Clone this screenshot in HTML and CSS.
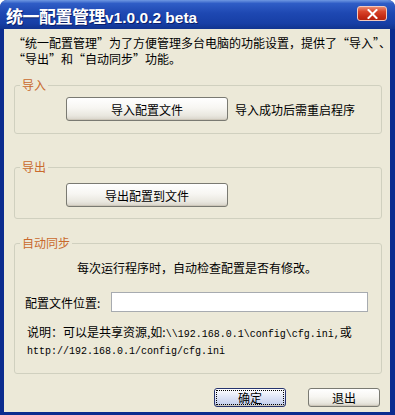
FILE: index.html
```html
<!DOCTYPE html>
<html lang="zh-CN">
<head>
    <meta charset="UTF-8">
    <meta name="viewport" content="width=device-width, initial-scale=1.0">
    <title>统一配置管理</title>
    <link rel="stylesheet" href="styles.css">
</head>
<body>
    <div class="window">
        <!-- 标题栏 -->
        <div class="titlebar">
            <span class="title"><span class="title-cn">统一配置管理</span><span class="title-ver">v1.0.0.2 beta</span></span>
            <button class="close-btn" aria-label="关闭">
                <svg width="11" height="10" viewBox="0 0 11 10">
                    <path d="M1.5 1 L9.5 9 M9.5 1 L1.5 9" stroke="#fff" stroke-width="2" stroke-linecap="square"/>
                </svg>
            </button>
        </div>

        <div class="frame">
            <p class="intro">“统一配置管理”为了方便管理多台电脑的功能设置，提供了“导入”、<br>“导出”和“自动同步”功能。</p>

            <!-- 导入 -->
            <fieldset class="group group-import">
                <legend>导入</legend>
                <div class="row">
                    <button class="btn btn-wide">导入配置文件</button>
                    <span class="hint">导入成功后需重启程序</span>
                </div>
            </fieldset>

            <!-- 导出 -->
            <fieldset class="group group-export">
                <legend>导出</legend>
                <div class="row">
                    <button class="btn btn-wide">导出配置到文件</button>
                </div>
            </fieldset>

            <!-- 自动同步 -->
            <fieldset class="group group-sync">
                <legend>自动同步</legend>
                <div class="sync-text">每次运行程序时，自动检查配置是否有修改。</div>
                <div class="field-row">
                    <label for="cfgPath" class="field-label">配置文件位置:</label>
                    <input type="text" id="cfgPath" class="field-input">
                </div>
                <div class="note">说明：可以是共享资源,如:<span class="mono">\\192.168.0.1\config\cfg.ini,</span>或<br><span class="mono">http://192.168.0.1/config/cfg.ini</span></div>
            </fieldset>

            <div class="actions">
                <button class="btn btn-small btn-default">确定</button>
                <button class="btn btn-small">退出</button>
            </div>
        </div>
    </div>
</body>
</html>
```

FILE: styles.css
```css
* {
    margin: 0;
    padding: 0;
    box-sizing: border-box;
}

body {
    background-color: #ffffff;
    font-family: "Noto Sans CJK SC", "Liberation Sans", sans-serif;
    font-size: 12px;
    color: #000;
}

.window {
    width: 395px;
    height: 415px;
    display: flex;
    flex-direction: column;
    border-radius: 7px 7px 0 0;
    overflow: hidden;
    background-color: #0b2c8f;
}

/* 标题栏 */
.titlebar {
    height: 29px;
    flex-shrink: 0;
    display: flex;
    align-items: center;
    padding-left: 6px;
    padding-right: 8px;
    background: linear-gradient(180deg, #6f98e2 0%, #2f5dc6 12%, #1e48b2 45%, #173fa6 80%, #11348f 100%);
}

.title {
    color: #fff;
    font-weight: bold;
    text-shadow: 1px 1px 0 #0a1f6a;
    white-space: nowrap;
    margin-top: 1px;
}

.title-cn {
    font-family: "Noto Sans CJK SC", sans-serif;
    font-size: 17px;
    letter-spacing: -0.5px;
}

.title-ver {
    font-family: "Liberation Sans", sans-serif;
    font-size: 15.5px;
}

.close-btn {
    margin-left: auto;
    width: 30px;
    height: 15px;
    margin-top: -2px;
    display: flex;
    align-items: center;
    justify-content: center;
    border: 1px solid #f3c9bd;
    border-radius: 3px;
    background: linear-gradient(180deg, #ea8a70 0%, #d9452a 35%, #c42a14 75%, #b52410 100%);
}

/* 主体 */
.frame {
    flex: 1;
    margin: 0 5px 3px 4px;
    padding: 6px 8px 0 10px;
    background-color: #ece9d8;
}

.intro {
    margin-left: -1px;
    line-height: 16px;
    white-space: nowrap;
}

.group {
    border: 1px solid #d0d0bf;
    border-radius: 3px;
    min-width: 0;
}

.group legend {
    margin-left: 5px;
    padding: 0 2px;
    line-height: 14px;
    color: #c9692d;
}

.group-import {
    margin-top: 11px;
    padding: 5px 0 12px 0;
}

.group-export {
    margin-top: 26px;
    padding: 9px 0 11px 0;
}

.group-sync {
    margin-top: 17px;
    padding: 10px 12px 14px 0;
}

.row {
    display: flex;
    align-items: center;
    padding-left: 51px;
}

.hint {
    margin-left: 7px;
}

/* 按钮 */
.btn {
    font-family: "Noto Sans CJK SC", sans-serif;
    font-size: 12px;
    color: #000;
    border: 1px solid #7a7a72;
    border-radius: 3px;
    background: linear-gradient(180deg, #ffffff 0%, #f7f6f2 45%, #e9e7df 80%, #d7d3c8 100%);
    box-shadow: inset 0 -1px 0 #cdc7ba;
}

.btn-wide {
    width: 162px;
    height: 24px;
}

.btn-small {
    width: 72px;
    height: 19px;
    line-height: 15px;
}

.btn-default {
    border-color: #26346e;
    background: linear-gradient(180deg, #ffffff 0%, #e4e9f8 40%, #c9d3ef 85%, #b5c2e8 100%);
    outline: 1px dotted #000;
    outline-offset: -3px;
}

.sync-text {
    text-align: center;
    line-height: 16px;
    padding-left: 10px;
}

.field-row {
    display: flex;
    align-items: center;
    margin-top: 16px;
    padding-left: 10px;
}

.field-label {
    width: 86px;
    flex-shrink: 0;
}

.field-input {
    width: 257px;
    height: 20px;
    border: 1px solid #a7abb0;
    background-color: #fff;
}

.note {
    margin-top: 13px;
    padding-left: 12px;
    line-height: 14px;
    white-space: nowrap;
}

.mono {
    font-family: "Liberation Mono", monospace;
    font-size: 10px;
}

.actions {
    display: flex;
    justify-content: flex-end;
    gap: 22px;
    margin-top: 14px;
    margin-right: 2px;
}
```
